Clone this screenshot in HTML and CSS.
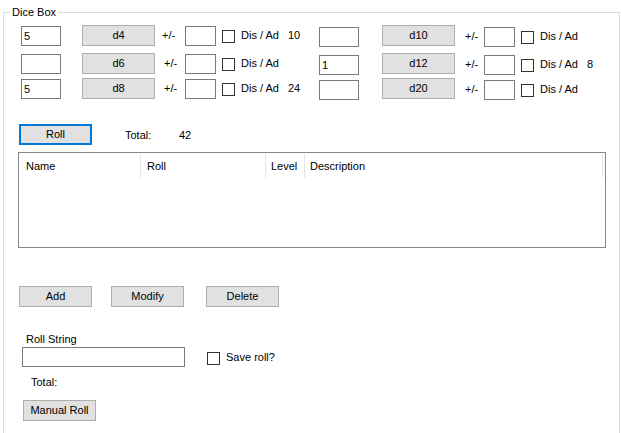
FILE: index.html
```html
<!DOCTYPE html>
<html>
<head>
<meta charset="utf-8">
<title>Dice Box</title>
<link rel="stylesheet" href="styles.css">
</head>
<body>
<div class="group">
  <span class="legend">Dice Box</span>
  <div class="dice">
    <div class="dgrid dleft">
      <input class="tb" value="5"><button class="btn">d4</button><span class="txt">+/-</span><input class="tb2"><input type="checkbox" class="cb"><span class="txt">Dis / Ad</span><span class="txt">10</span>
      <input class="tb" value=""><button class="btn">d6</button><span class="txt pm">+/-</span><input class="tb2"><input type="checkbox" class="cb"><span class="txt">Dis / Ad</span><span class="txt"></span>
      <input class="tb" value="5"><button class="btn">d8</button><span class="txt pm">+/-</span><input class="tb2"><input type="checkbox" class="cb"><span class="txt">Dis / Ad</span><span class="txt">24</span>
    </div>
    <div class="dgrid dright">
      <input class="tb" value=""><button class="btn">d10</button><span class="txt">+/-</span><input class="tb2"><input type="checkbox" class="cb"><span class="txt">Dis / Ad</span><span class="txt"></span>
      <input class="tb" value="1"><button class="btn">d12</button><span class="txt">+/-</span><input class="tb2"><input type="checkbox" class="cb"><span class="txt">Dis / Ad</span><span class="txt">8</span>
      <input class="tb" value=""><button class="btn">d20</button><span class="txt">+/-</span><input class="tb2"><input type="checkbox" class="cb"><span class="txt">Dis / Ad</span><span class="txt"></span>
    </div>
  </div>

  <div class="rollrow">
    <button class="btn btn-focus">Roll</button>
    <span class="total-label">Total:</span>
    <span class="total-val">42</span>
  </div>

  <div class="listview">
    <div class="lv-header">
      <div class="lv-col c1">Name</div>
      <div class="lv-col c2">Roll</div>
      <div class="lv-col c3">Level</div>
      <div class="lv-col c4">Description</div>
    </div>
  </div>

  <div class="actions">
    <button class="btn">Add</button>
    <button class="btn">Modify</button>
    <button class="btn">Delete</button>
  </div>

  <div class="rs-label">Roll String</div>
  <div class="rs-row">
    <input class="rs-input" value="">
    <input type="checkbox" class="cb rs-cb">
    <span class="rs-save">Save roll?</span>
  </div>
  <div class="manual-total">Total:</div>
  <button class="btn manual-btn">Manual Roll</button>
</div>
</body>
</html>
```

FILE: styles.css
```css
html, body {
  margin: 0;
  padding: 0;
  background: #ffffff;
  overflow: hidden;
}
body {
  width: 621px;
  height: 433px;
  font-family: "Liberation Sans", Arial, sans-serif;
  font-size: 11px;
  color: #000;
}
input, button {
  font-family: "Liberation Sans", Arial, sans-serif;
  font-size: 11px;
  color: #000;
  margin: 0;
  box-sizing: border-box;
  -webkit-appearance: none;
  appearance: none;
  outline: none;
}
.group {
  position: relative;
  margin: 12px 1px 0 3px;
  width: 617px;
  height: 430px;
  box-sizing: border-box;
  border: 1px solid #dcdcdc;
  border-bottom: 0;
}
.legend {
  position: absolute;
  top: -8px;
  left: 6px;
  padding: 0 2px;
  background: #fff;
  line-height: 14px;
}
.dice {
  display: flex;
  margin-top: 12px;
}
.dgrid {
  display: grid;
  grid-template-rows: 28px 25px 22px;
  align-items: start;
}
.dleft {
  margin-left: 17px;
  grid-template-columns: 61px 80px 23px 37px 19px 47px 31px;
}
.dright {
  grid-template-columns: 63px 83px 19px 37px 19px 47px 30px;
}
.tb {
  width: 40px;
  height: 20px;
  margin-top: 1px;
  border: 1px solid #7a7a7a;
  background: #fff;
  padding: 0 0 0 2px;
}
.tb2 {
  width: 31px;
  height: 20px;
  margin-top: 1px;
  border: 1px solid #7a7a7a;
  background: #fff;
  padding: 0 0 0 2px;
}
.dright .tb, .dright .tb2 {
  margin-top: 2px;
}
.btn {
  width: 73px;
  height: 21px;
  border: 1px solid #adadad;
  background: #e1e1e1;
  padding: 0;
  line-height: 19px;
  text-align: center;
}
.cb {
  width: 13px;
  height: 13px;
  margin-top: 5px;
  border: 1px solid #333;
  background: #fff;
  display: block;
}
.dright .cb {
  margin-top: 6px;
}
.txt {
  line-height: 21px;
  white-space: nowrap;
}
.dright .txt {
  line-height: 23px;
}
.pm {
  padding-left: 2px;
}
.rollrow {
  display: flex;
  align-items: center;
  margin-top: 24px;
  padding-left: 15px;
}
.btn-focus {
  border: 2px solid #0078d7;
  line-height: 17px;
}
.total-label {
  margin-left: 33px;
  width: 54px;
}
.listview {
  margin: 7px 0 0 14px;
  width: 588px;
  height: 96px;
  box-sizing: border-box;
  border: 1px solid #828790;
  background: #fff;
}
.lv-header {
  display: flex;
  margin-top: 1px;
  height: 24px;
}
.lv-col {
  box-sizing: border-box;
  height: 24px;
  line-height: 24px;
  border-right: 1px solid #e5e5e5;
  padding-left: 6px;
  white-space: nowrap;
}
.c1 { width: 122px; padding-left: 7px; }
.c2 { width: 125px; }
.c3 { width: 39px; padding-left: 5px; }
.c4 { width: 298px; padding-left: 5px; }
.actions {
  display: grid;
  grid-template-columns: 92px 95px 73px;
  margin-top: 38px;
  padding-left: 15px;
}
.rs-label {
  margin-top: 26px;
  padding-left: 22px;
  line-height: 13px;
}
.rs-row {
  display: flex;
  align-items: flex-start;
  margin-top: 1px;
}
.rs-input {
  margin-left: 18px;
  width: 163px;
  height: 20px;
  border: 1px solid #7a7a7a;
  background: #fff;
}
.rs-cb {
  margin-left: 22px;
  margin-top: 5px;
}
.rs-save {
  margin-left: 6px;
  margin-top: 4px;
  line-height: 13px;
}
.manual-total {
  margin-top: 9px;
  padding-left: 27px;
  line-height: 13px;
}
.manual-btn {
  display: block;
  margin: 11px 0 0 19px;
}
```
